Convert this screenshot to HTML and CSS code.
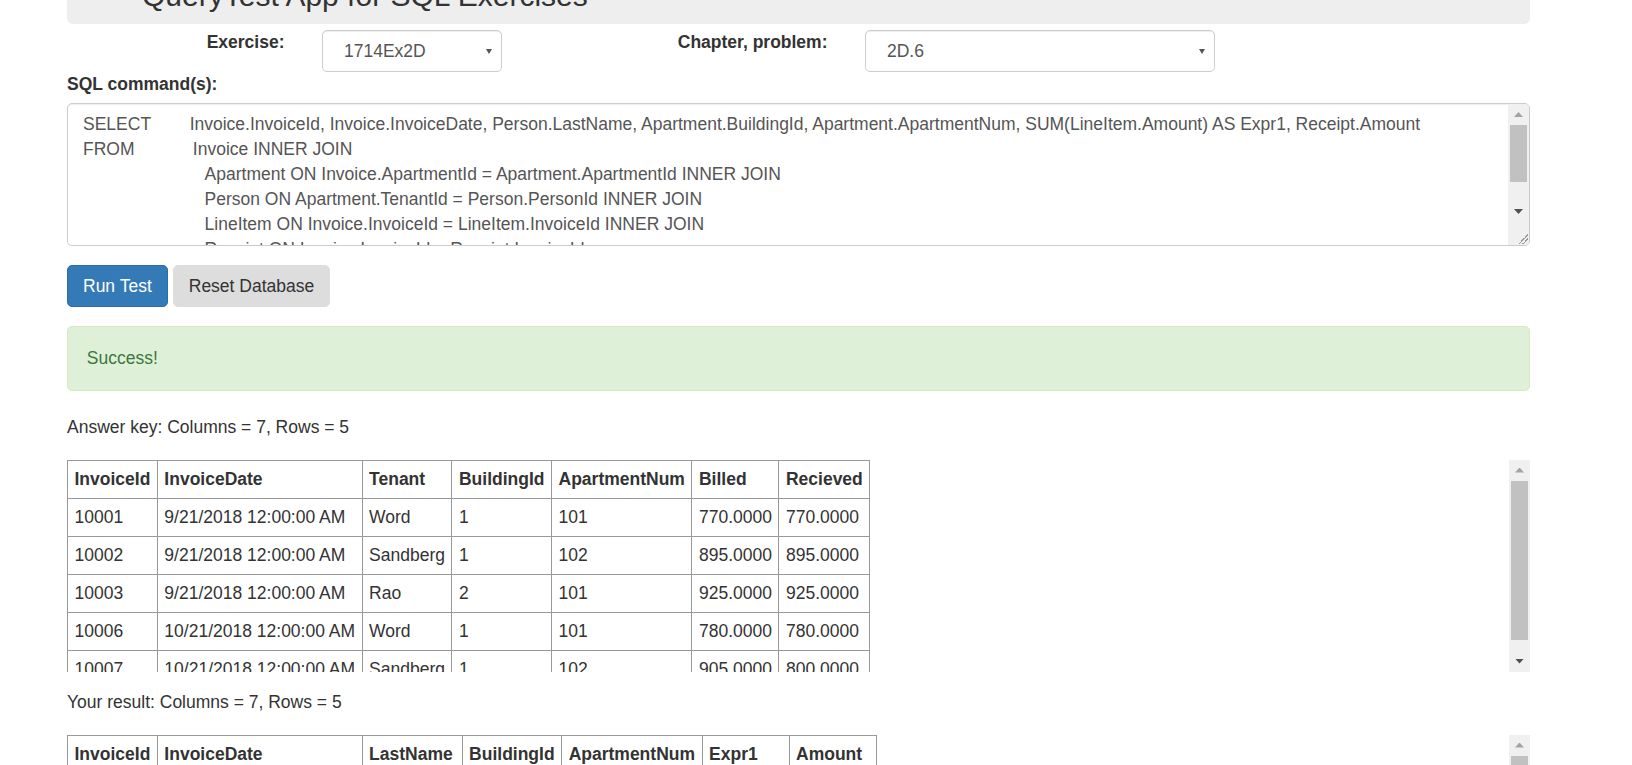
FILE: index.html
```html
<!DOCTYPE html>
<html lang="en">
<head>
<meta charset="utf-8">
<title>QueryTest App for SQL Exercises</title>
<link rel="stylesheet" href="styles.css">
</head>
<body>
<div class="container">
  <div class="jumbotron"><h1 class="title">QueryTest App for SQL Exercises</h1></div>

  <div class="form-row">
    <label class="form-label" for="exercise">Exercise:</label>
    <div class="select-wrap"><select id="exercise" class="form-select"><option>1714Ex2D</option></select></div>
    <label class="form-label" for="problem">Chapter, problem:</label>
    <div class="select-wrap"><select id="problem" class="form-select"><option>2D.6</option></select></div>
  </div>

  <label class="sql-label" for="sql">SQL command(s):</label>
  <div class="sql-box">
    <textarea id="sql" class="sql-input" spellcheck="false">SELECT        Invoice.InvoiceId, Invoice.InvoiceDate, Person.LastName, Apartment.BuildingId, Apartment.ApartmentNum, SUM(LineItem.Amount) AS Expr1, Receipt.Amount
FROM            Invoice INNER JOIN
                         Apartment ON Invoice.ApartmentId = Apartment.ApartmentId INNER JOIN
                         Person ON Apartment.TenantId = Person.PersonId INNER JOIN
                         LineItem ON Invoice.InvoiceId = LineItem.InvoiceId INNER JOIN
                         Receipt ON Invoice.InvoiceId = Receipt.InvoiceId
GROUP BY Invoice.InvoiceId, Invoice.InvoiceDate, Person.LastName, Apartment.BuildingId, Apartment.ApartmentNum, Receipt.Amount</textarea>
    <div class="vscroll vscroll-sql" aria-hidden="true">
      <span class="vscroll-btn up"></span>
      <span class="vscroll-track"><span class="vscroll-thumb"></span></span>
      <span class="vscroll-btn down"></span>
      <span class="vscroll-corner"></span>
    </div>
  </div>

  <div class="actions">
    <button type="button" class="btn btn-primary">Run Test</button>
    <button type="button" class="btn btn-default">Reset Database</button>
  </div>

  <div class="alert-success">Success!</div>

  <p class="summary">Answer key: Columns = 7, Rows = 5</p>
  <div class="result-box">
    <div class="result-scroll">
      <table class="result-table">
        <thead>
          <tr><th>InvoiceId</th><th>InvoiceDate</th><th>Tenant</th><th>BuildingId</th><th>ApartmentNum</th><th>Billed</th><th>Recieved</th></tr>
        </thead>
        <tbody>
          <tr><td>10001</td><td>9/21/2018 12:00:00 AM</td><td>Word</td><td>1</td><td>101</td><td>770.0000</td><td>770.0000</td></tr>
          <tr><td>10002</td><td>9/21/2018 12:00:00 AM</td><td>Sandberg</td><td>1</td><td>102</td><td>895.0000</td><td>895.0000</td></tr>
          <tr><td>10003</td><td>9/21/2018 12:00:00 AM</td><td>Rao</td><td>2</td><td>101</td><td>925.0000</td><td>925.0000</td></tr>
          <tr><td>10006</td><td>10/21/2018 12:00:00 AM</td><td>Word</td><td>1</td><td>101</td><td>780.0000</td><td>780.0000</td></tr>
          <tr><td>10007</td><td>10/21/2018 12:00:00 AM</td><td>Sandberg</td><td>1</td><td>102</td><td>905.0000</td><td>800.0000</td></tr>
        </tbody>
      </table>
    </div>
    <div class="vscroll vscroll-table" aria-hidden="true">
      <span class="vscroll-btn up"></span>
      <span class="vscroll-track"><span class="vscroll-thumb"></span></span>
      <span class="vscroll-btn down"></span>
    </div>
  </div>

  <p class="summary">Your result: Columns = 7, Rows = 5</p>
  <div class="result-box">
    <div class="result-scroll">
      <table class="result-table">
        <thead>
          <tr><th>InvoiceId</th><th>InvoiceDate</th><th class="col-name">LastName</th><th>BuildingId</th><th>ApartmentNum</th><th>Expr1</th><th>Amount</th></tr>
        </thead>
        <tbody>
          <tr><td>10001</td><td>9/21/2018 12:00:00 AM</td><td>Word</td><td>1</td><td>101</td><td>770.0000</td><td>770.0000</td></tr>
          <tr><td>10002</td><td>9/21/2018 12:00:00 AM</td><td>Sandberg</td><td>1</td><td>102</td><td>895.0000</td><td>895.0000</td></tr>
          <tr><td>10003</td><td>9/21/2018 12:00:00 AM</td><td>Rao</td><td>2</td><td>101</td><td>925.0000</td><td>925.0000</td></tr>
          <tr><td>10006</td><td>10/21/2018 12:00:00 AM</td><td>Word</td><td>1</td><td>101</td><td>780.0000</td><td>780.0000</td></tr>
          <tr><td>10007</td><td>10/21/2018 12:00:00 AM</td><td>Sandberg</td><td>1</td><td>102</td><td>905.0000</td><td>800.0000</td></tr>
        </tbody>
      </table>
    </div>
    <div class="vscroll vscroll-table" aria-hidden="true">
      <span class="vscroll-btn up"></span>
      <span class="vscroll-track"><span class="vscroll-thumb"></span></span>
      <span class="vscroll-btn down"></span>
    </div>
  </div>
</div>
</body>
</html>
```

FILE: styles.css
```css
html {
  overflow: hidden;
}

body {
  margin: 0;
  font-family: "Liberation Sans", Arial, Helvetica, sans-serif;
  font-size: 17.5px;
  line-height: 25px;
  color: #333;
  background: #fff;
}

.container {
  margin-left: 67px;
  width: 1463px;
}

/* header */
.jumbotron {
  margin-top: -51px;
  padding: 30px 75px 12px;
  background: #eee;
  border-radius: 6px;
}

.title {
  margin: 0;
  font-size: 30px;
  line-height: 33px;
  font-weight: 500;
  color: #333;
}

/* selectors row */
.form-row {
  display: grid;
  grid-template-columns: 217.5px 180px 288px 350px;
  column-gap: 37.5px;
  margin-top: 6px;
}

.form-label {
  font-weight: bold;
  text-align: right;
}

.select-wrap {
  position: relative;
}

.select-wrap::after {
  content: "";
  position: absolute;
  right: 10px;
  top: 19px;
  border-left: 3px solid transparent;
  border-right: 3px solid transparent;
  border-top: 5px solid #555;
  pointer-events: none;
}

.form-select {
  -webkit-appearance: none;
  appearance: none;
  display: block;
  box-sizing: border-box;
  width: 100%;
  height: 42px;
  margin: 0;
  padding: 0 30px 0 21px;
  font: inherit;
  color: #555;
  background: #fff;
  border: 1px solid #ccc;
  border-radius: 5px;
  box-shadow: inset 0 1px 1px rgba(0, 0, 0, 0.075);
}

/* SQL input */
.sql-label {
  display: block;
  font-weight: bold;
  margin-bottom: 6px;
}

.sql-box {
  position: relative;
}

.sql-input {
  display: block;
  box-sizing: border-box;
  width: 100%;
  height: 143px;
  margin: 0;
  padding: 7.5px 15px;
  font: inherit;
  line-height: 25px;
  color: #555;
  background: #fff;
  border: 1px solid #ccc;
  border-radius: 5px;
  box-shadow: inset 0 1px 1px rgba(0, 0, 0, 0.075);
  overflow-y: auto;
  white-space: pre-wrap;
  resize: both;
}

/* drawn scrollbars */
.vscroll {
  position: absolute;
  top: 0;
  right: 0;
  bottom: 0;
  width: 21px;
  display: flex;
  flex-direction: column;
  background: #f0f0f0;
  pointer-events: none;
}

.vscroll-sql {
  top: 1px;
  right: 1px;
  bottom: 1px;
  border-radius: 0 4px 4px 0;
}

.vscroll-btn {
  flex: none;
  height: 21px;
  display: flex;
  align-items: center;
  justify-content: center;
}

.vscroll-btn::before {
  content: "";
  width: 9px;
  height: 5px;
}

.vscroll-btn.up::before {
  background: #a3a3a3;
  clip-path: polygon(50% 0, 100% 100%, 0 100%);
}

.vscroll-btn.down::before {
  background: #505050;
  clip-path: polygon(0 0, 100% 0, 50% 100%);
}

.vscroll-track {
  flex: 1;
}

.vscroll-thumb {
  display: block;
  margin: 0 2px;
  background: #c1c1c1;
}

.vscroll-sql .vscroll-thumb {
  height: 57px;
}

.vscroll-table .vscroll-thumb {
  height: 159px;
}

.vscroll-corner {
  flex: none;
  height: 23px;
  background: linear-gradient(135deg, transparent 0 50%, #999 50% 58%, transparent 58% 70%, #999 70% 78%, transparent 78%) right 1px bottom 1px / 10px 10px no-repeat;
}

/* buttons */
.actions {
  display: flex;
  gap: 5px;
  margin-top: 19px;
}

.btn {
  margin: 0;
  padding: 7.5px 15px;
  font: inherit;
  line-height: 25px;
  border: 1px solid transparent;
  border-radius: 5px;
  cursor: pointer;
}

.btn-primary {
  color: #fff;
  background: #337ab7;
  border-color: #2e6da4;
}

.btn-default {
  color: #333;
  background: #ddd;
  border-color: #ddd;
}

/* alert */
.alert-success {
  margin-top: 19px;
  margin-bottom: 24px;
  padding: 18.75px;
  color: #3c763d;
  background: #dff0d8;
  border: 1px solid #d6e9c6;
  border-radius: 5px;
}

/* results */
.summary {
  margin: 0 0 20px;
}

.result-box {
  position: relative;
  margin-bottom: 18px;
}

.result-scroll {
  height: 212px;
  overflow-y: auto;
}

.result-table {
  border-collapse: collapse;
  border: 1px solid #999;
}

.result-table th,
.result-table td {
  border: 1px solid #999;
  padding: 6px 6.5px;
  text-align: left;
  white-space: nowrap;
}

.result-table th {
  font-weight: bold;
}

.result-table .col-name {
  width: 86px;
}
```
